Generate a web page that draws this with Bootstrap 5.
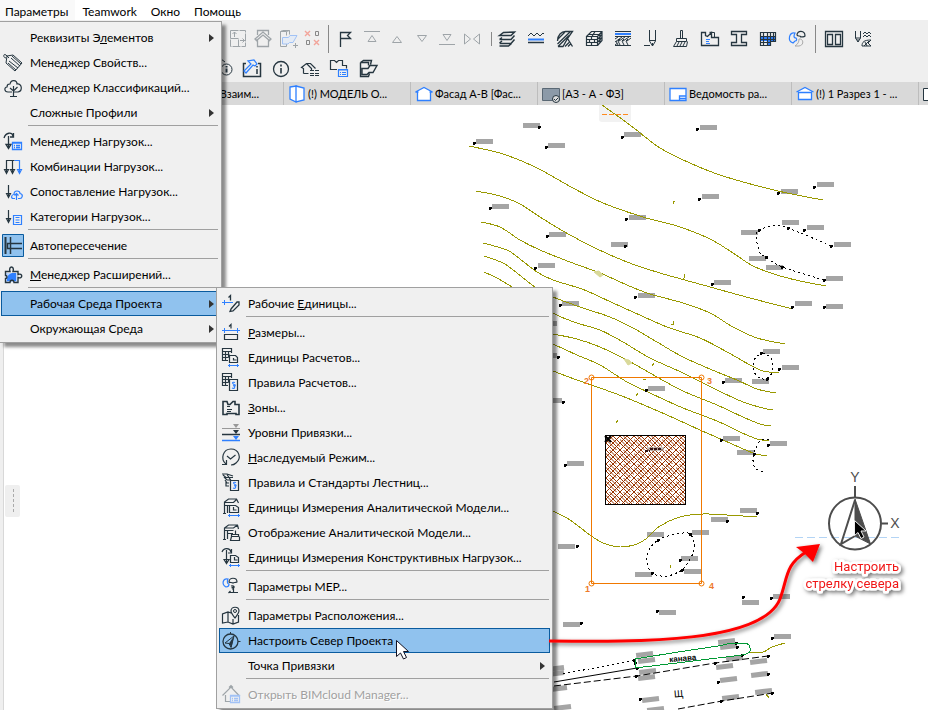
<!DOCTYPE html>
<html lang="ru">
<head>
<meta charset="utf-8">
<meta name="viewport" content="width=device-width, initial-scale=1">
<title>Параметры — Рабочая Среда Проекта</title>
<link href="https://cdn.jsdelivr.net/npm/bootstrap@5.3.0/dist/css/bootstrap.min.css" rel="stylesheet">
<style>
  :root { --ink: #263640; --accent: #2f80ff; --panel: #f0f0f0; --line: #a0a0a0; --hit: #90c2ee; --hit-line: #0a5b9e; }
  body { font-family: Lato, "Noto Sans", sans-serif; font-size: 12px; line-height: 16px; color: #000; background: #fff; }
  button { font: inherit; color: inherit; }
  svg { display: block; fill: none; stroke: var(--ink); stroke-width: 1; }
  .b { stroke: var(--accent); }
  .bf { fill: var(--accent); stroke: none; }
  .kf { fill: var(--ink); stroke: none; }
  .top-menu { height: 20px; }
  .top-menu .nav-link { padding: 4px 7px 0; color: #000; line-height: 16px; }
  .top-menu .nav-link.active { background: #f9f9f9; padding-left: 5px; }
  .tools { background: #efefef; padding: 4px 0 1px; }
  .tool-row { height: 30px; padding-left: 225px; }
  .tool-row.second { height: 27px; padding: 3px 0 0 208px; }
  .tool { width: 29px; height: 24px; padding: 0; border: 0; background: none; flex: none; display: flex; justify-content: center; align-items: center; }
  .tool.slim { width: 25px; }
  .off { opacity: .4; }
  .rule { width: 1px; height: 28px; background: #888; flex: none; margin: 0 5px 0 3px; }
  .rule.short { height: 14px; margin: 0 0 0 7px; }
  .rule.last { margin: 0 3px 0 4px; }
  .doc-tabs { background: #d9d9d9; height: 23px; padding-left: 156px; }
  .doc-tab { flex: 0 0 127px; padding: 0 0 0 4px; gap: 2px; border: 0; border-left: 1px solid #bdbdbd; background: none; font-size: 11px; white-space: nowrap; }
  .plan { background: linear-gradient(90deg, #efefef 3px, #d8d8d8 3px, #d8d8d8 4px, #fff 4px); min-height: 400px; }
  .grip { left: 5px; top: 380px; width: 15px; height: 32px; background: #efefef; border-radius: 2px; }
  .menu-box { font-size: 12px; margin: 0; padding: 3px 2px 1px; background: var(--panel); border: 1px solid var(--line); border-radius: 0; color: #000; box-shadow: 4px 4px 3px rgba(0,0,0,.45); }
  .menu-main { top: 21px; left: 0; width: 222px; border-left: 0; padding-left: 1px; z-index: 10; }
  .menu-sub { top: -4px; left: 215px; width: 337px; }
  .entry { display: flex; align-items: center; height: 25px; padding: 0 5px 0 0; line-height: 16px; color: #000; }
  .entry > svg:first-child, .entry > .blank { width: 24px; height: 24px; margin-right: 5px; flex: none; }
  .entry .tri { margin-left: auto; fill: #333; stroke: none; flex: none; }
  .entry.hit, .entry:hover:not(:disabled) { background: var(--hit); box-shadow: inset 0 0 0 1px var(--hit-line); }
  .entry:disabled { color: #a0a0a0; text-shadow: 1px 1px #fff; }
  .entry:disabled svg { opacity: .4; }
  .split { height: 4px; margin: 0 1px 0 27px; border-top: 1px solid var(--line); }
  .over { z-index: 20; pointer-events: none; }
  .contour { stroke: #999900; shape-rendering: crispEdges; }
  .spots { stroke: #000; stroke-dasharray: 2 3; shape-rendering: crispEdges; }
  .tag-box { fill: #a5a5a5; stroke: none; }
  .pt { fill: #000; stroke: none; }
  .num { font: bold 9px "Liberation Sans", sans-serif; fill: #ee7a2a; stroke: none; }
  .axis { font: 14px "Liberation Sans", sans-serif; fill: #4d4d4d; stroke: none; }
  .note { font: 13px Roboto, sans-serif; fill: #f01818; stroke: #fff; stroke-width: 5px; stroke-linejoin: round; paint-order: stroke; }
</style>
<script src="https://cdn.jsdelivr.net/npm/bootstrap@5.3.0/dist/js/bootstrap.bundle.min.js"></script>
</head>
<body class="d-flex flex-column min-vh-100 position-relative overflow-hidden">

<nav class="top-menu nav flex-nowrap ps-0" aria-label="Главное меню">
  <a class="nav-link active" href="#">Параметры</a>
  <a class="nav-link" href="#">Teamwork</a>
  <a class="nav-link" href="#">Окно</a>
  <a class="nav-link" href="#">Помощь</a>
</nav>

<div class="tools" role="toolbar" aria-label="Инструменты">
  <div class="tool-row d-flex align-items-center">
    <button class="tool slim off" aria-label="Размер"><svg width="24" height="24"><path d="M4.500 3.500h15v16h-15zM4.500 11.500h8v8M8.500 10V5M6.500 7l2-2 2 2M14 13.500h5M16.500 11.500l2 2-2 2" stroke-dasharray="8 1"/></svg></button>
    <button class="tool slim off" aria-label="Дом"><svg width="24" height="24"><path d="M6.500 8V3.500h11V8M4 12l8-7 8 7-1.500 1.500L12 8l-6.500 5.500zM6.500 13v6.500h11V13" stroke-width="1.300"/></svg></button>
    <button class="tool slim off" aria-label="Добавить элемент"><svg width="24" height="24"><path d="M4.500 4.500l2-1h7v4M4.500 4.500v15h6v-4M4.500 4.500h6v4M10.500 4.500l3-1M17 18.500h5M19.500 16v5"/><path class="b" fill="#d6e6ff" d="M6.500 10.500h6l1.500-2h7l-4 7h-3.500l-1.500 1.500H6.500z"/></svg></button>
    <button class="tool slim" aria-label="Точки"><svg width="24" height="24"><path d="M4 4l5 5m0-5l-5 5M13 13l5 5m0-5l-5 5" stroke="#f2a49a" stroke-width="1.400"/><path d="M14.500 4.500h3v4h-3zM5.500 13.500h3v4h-3z" stroke="#888"/></svg></button>
    <span class="rule"></span>
    <button class="tool slim" aria-label="Флаг"><svg width="24" height="24"><path d="M5.500 20V5.500h10l-3 3 3 3h-10" stroke-width="1.300"/></svg></button>
    <button class="tool slim off" aria-label="На передний план"><svg width="24" height="24"><path d="M4 4.500h16M8 14.500l4-6 4 6z"/></svg></button>
    <button class="tool slim off" aria-label="Вверх"><svg width="24" height="24"><path d="M7.500 15.500l4.500-6 4.500 6z"/></svg></button>
    <button class="tool slim off" aria-label="Вниз"><svg width="24" height="24"><path d="M7.500 8.500l4.500 6 4.500-6z"/></svg></button>
    <button class="tool slim off" aria-label="На задний план"><svg width="24" height="24"><path d="M4 17.500h16M8 7.500l4 6 4-6z"/></svg></button>
    <button class="tool slim off" aria-label="Отразить"><svg width="24" height="24"><path d="M4.500 7v10l6-5zM19.500 7v10l-6-5z"/></svg></button>
    <span class="rule short"></span>
    <button class="tool" aria-label="Слои"><svg width="24" height="24"><path d="M4.500 8.500l4-3 11-.5-3.500 3.500zM4.500 12.500l2.500-2M19.500 8.500L16 12.500H4.500M4.500 16l2.500-2M19.500 12.500L16 16.500H4.500M4.500 19h9l3-2.500" stroke-width="1.500"/></svg></button>
    <button class="tool" aria-label="Типы линий"><svg width="24" height="24"><path d="M4 9l3-3 3 3 3-3 3 3 3-3 1 1"/><path class="b" d="M4 12.500h16" stroke-width="2"/><path d="M4 15.500h16" stroke-width="1.500"/></svg></button>
    <button class="tool" aria-label="Штриховки"><svg width="24" height="24"><path d="M4.500 14c0-6 4-9.500 8-9.500h7l-5 7 5 8M5 19.500h5l4.500-8M5 12l7-7M4.500 17L17 5M5 19.500l11-11M12 19.500l4-4M15 19.500l3-3" stroke-width="1.300"/></svg></button>
    <button class="tool" aria-label="Строительные материалы"><svg width="24" height="24"><path d="M4.500 9.500h11v9h-11zM4.500 9.500l5-5h10.500v9l-4.500 5M15.500 9.500l4.500-5M4.500 12.500h11l4.500-5M4.500 15.500h11l4.500-5M9.500 9.500v3M7.500 12.500v3M12.500 12.500v3M9.500 15.500v3M7 7.500h11M13 4.500l-3 5M18 7v9" stroke-width="1.200"/></svg></button>
    <button class="tool" aria-label="Многослойные конструкции"><svg width="24" height="24"><path d="M4 4.500h16M4 9.500h16"/><path class="b" d="M4 7h16" stroke-width="2"/><path d="M4 12l3-2M4 15l7-5M4 18l2-1.500M9 12l-2 2 2 4M8 14l6-4M13 12l-2 2 2 4M12 14l6-4M17 12l-2 2 2 4M16 14l4-3M5 14l2 4M4 18.500h16"/></svg></button>
    <button class="tool" aria-label="Перья"><svg width="24" height="24"><path d="M9.500 3v11l3 5 3-5V3M9.500 13.500h6M12.500 16v3M4 18.500h6" /></svg></button>
    <button class="tool" aria-label="Покрытия"><svg width="24" height="24"><path d="M11.500 3.500h2v8h-2zM7.500 11.500h10v3h-10zM7.500 14.500l-3 5h13l1-5M8 19l2-4M11 19l2-4M14 19l2-4"/></svg></button>
    <button class="tool" aria-label="Категории зон"><svg width="24" height="24"><path d="M3.500 5.500h4v3l2 1 4-4v5h7v8h-17zM13.500 5.500h-2" stroke-width="1.300"/><path d="M13.500 5.500h3v5"/><path class="b" d="M8 12.500h4M8 14.500h3M8 16.500h4"/></svg></button>
    <button class="tool" aria-label="Профили"><svg width="24" height="24"><path d="M4.500 4.500h15v3h-5v8h5v3h-15v-3h5v-8h-5z" stroke-width="1.300"/></svg></button>
    <button class="tool" aria-label="Сетка"><svg width="24" height="24"><path d="M5 9h14v5h-4v4h-4v-4H5z" class="bf"/><path d="M4.500 5.500h15v9h-5v4h-10zM4.500 9.500h15M4.500 12.500h15M4.500 15.500h10M7.500 5v13M11.500 5v13M14.500 5v10M17.500 5v10" stroke-width="1.200"/></svg></button>
    <button class="tool" aria-label="Системы MEP"><svg width="24" height="24"><path class="b" d="M10 6c-6-1-8 8-2 10l2-2c2 0 2-2 1-3-3 0-2-3-1-5z" stroke-width="1.200"/><path d="M12 8c0-5 8-5 8 1-2 2-3 0-4 1-1-2-3 0-4-2z" stroke-width="1.200"/><path stroke="#aaa" d="M14 12c4-1 6 6 0 7h-4c3-2 4-4 4-7z"/></svg></button>
    <span class="rule last"></span>
    <button class="tool" aria-label="Палитры"><svg width="24" height="24"><path d="M3.500 4.500h17v15h-17zM5.500 7.500h5v10h-5zM13.500 7.500h5v10h-5z" stroke-width="1.300"/></svg></button>
    <button class="tool" aria-label="Подбор параметров"><svg width="24" height="24"><path d="M4.500 4v7l2.500 4 2.500-4V4M4.500 11h5M12 7l2-2 2 2 2-2 2 2M12 10l2-2 2 2 2-2 2 2M11 19c0-4 2-6 9-6l-3 3 3 3zM13 19l5-5M16 19l-2-4M7 12v3"/></svg></button>
  </div>
  <div class="tool-row second d-flex">
    <button class="tool" aria-label="Сведения об элементе"><svg width="24" height="24"><path d="M4 6l6-4 4 3"/><circle cx="15.500" cy="12.500" r="5.500"/><path d="M15.500 9v1.500M15.500 11.500v4" stroke-width="2"/></svg></button>
    <button class="tool" aria-label="Правка свойств"><svg width="24" height="24"><path d="M6 6.500H3.500v13h17v-13H18M17 9v1.500M17 12v5" stroke-width="1.500"/><path class="b" d="M4 14l7-7-3-3 6-1 3 4-2 2-2-1-7 8z" stroke-width="1.200"/></svg></button>
    <button class="tool" aria-label="Информация"><svg width="24" height="24"><circle cx="12" cy="12" r="7.500" stroke-width="1.300"/><path d="M12 7.500v2M12 11v5.500" stroke-width="1.600"/></svg></button>
    <button class="tool" aria-label="Список элементов"><svg width="24" height="24"><path d="M5.500 16.500v-5l-2-1 5-4h4l5 5M8.500 6.500l5 5v2M5.500 16.500h5" stroke-width="1.200"/><path d="M12 13.500h4M17 13.500h4M12 16.500h4M17 16.500h4M12 18.500h4M17 18.500h4"/></svg></button>
    <button class="tool" aria-label="Таблица зон"><svg width="24" height="24"><path d="M10 12.500H3.500v-9h4l2 2 2-2h4v5h4v3" stroke-width="1.200"/><path class="b" d="M11.500 12.500h9v7h-9zM11 13h10M13 15.500h1M15 15.500h4M13 17.500h1M15 17.500h4" stroke-width="1.200"/></svg></button>
    <button class="tool" aria-label="Пакет элементов"><svg width="24" height="24"><path d="M4.500 5.500l3-2h8l-1 4M4.500 5.500h8v3M4.500 5.500v14h8l1-3M6 11.500h6l2-3h7l-4 7h-4l-2 2H6z" stroke-width="1.400"/></svg></button>
  </div>
</div>

<div class="doc-tabs d-flex flex-nowrap overflow-hidden" role="tablist">
  <button class="doc-tab d-flex align-items-center justify-content-end pe-4" role="tab">Взаим...</button>
  <button class="doc-tab d-flex align-items-center" role="tab"><svg width="18" height="20"><path class="b" fill="#fff" d="M2 3l6-1v16l-6-3zM8 2l8 2v12l-8 2z" stroke-width="1.300"/></svg><span>(!) МОДЕЛЬ О...</span></button>
  <button class="doc-tab d-flex align-items-center" role="tab"><svg width="18" height="20"><path class="b" fill="#fff" d="M2.500 8v8.500h13V8M.5 8L9 3.500 17.500 8z" stroke-width="1.300"/><path d="M3.500 7h11v2h-11z" fill="#fff" stroke="none"/></svg><span>Фасад А-В [Фас...</span></button>
  <button class="doc-tab d-flex align-items-center" role="tab"><svg width="18" height="20"><path fill="#8c9aa8" stroke="#5a6874" d="M.5 4.500h17v12H.5z"/><circle cx="14" cy="15" r="3.500" fill="#ddd"/><path d="M12 15l1.500 1.500L16 14"/></svg><span>[АЗ - А - ФЗ]</span></button>
  <button class="doc-tab d-flex align-items-center" role="tab"><svg width="18" height="20"><path class="b" fill="#fff" d="M1 4.500h16v12H1zM10.500 16v-4H17M11 14.500h6" stroke-width="1.300"/></svg><span>Ведомость ра...</span></button>
  <button class="doc-tab d-flex align-items-center" role="tab"><svg width="18" height="20"><path class="b" fill="#fff" d="M2.500 8.500h13v7h-13zM.5 8L9 3.500 17.500 8" stroke-width="1.300"/></svg><span>(!) 1 Разрез 1 - ...</span></button>
  <button class="doc-tab d-flex align-items-center" role="tab" aria-label="План"><svg width="18" height="20"><path fill="#fff" d="M.5 4.500h16v12H.5z"/></svg></button>
</div>

<main class="plan flex-grow-1 position-relative overflow-hidden">
  <div class="grip position-absolute"><svg width="15" height="32"><path d="M8.500 4v24" stroke="#aaa" stroke-dasharray="3 2"/></svg></div>
  <svg class="position-absolute top-0 start-0 w-100 h-100" viewBox="0 105 928 605" preserveAspectRatio="xMinYMin slice" role="img" aria-label="План участка">
    <defs>
      <pattern id="hatch" width="14" height="14" patternUnits="userSpaceOnUse" patternTransform="translate(606 436)">
        <path d="M-1-1l16 16M-1 15L15-1M-1 6l9 9M6-1l9 9M8-1L-1 8M15 6L6 15M-1 2.500L11.500 15M2.500-1L15 11.500" stroke="#993300"/>
      </pattern>
    </defs>
    <rect x="599" y="100" width="32" height="22" rx="3" fill="#f2f2f2" stroke="none"/>
    <g id="terrain"></g>
    <path d="M602 114.500h26" stroke="#ff8a1e" stroke-dasharray="5 2"/>
    <path d="M594 272l5-1 4 4-3 2zM624 359l5 1 3 3-4 2z" fill="#d9d99a" stroke="#d9d99a"/>
    <path class="contour" d="M673.500 204v-2l1-1M684.500 274v3l-1 2M673 321v3h-2M654 363l-2 3M646 379l-3 1M638 393l-2 3M618 420l-2 3M670 565l1 3M766 694l3 4"/>
    <rect x="605.500" y="435.500" width="80" height="69" fill="url(#hatch)" stroke="#000"/>
    <path d="M605 436l6 6M611 436l-6 6" stroke="#000" stroke-width="2"/>
    <rect class="tag-box" x="647" y="447" width="17" height="4" opacity=".6"/>
    <path d="M645 451h5M650 449h12" stroke="#311" stroke-width="2" stroke-dasharray="3 1"/>
    <g stroke="#f07800">
      <path d="M591.500 377.500h110v206h-110z"/>
      <circle cx="591.500" cy="377.500" r="2.500"/><circle cx="701.500" cy="377.500" r="2.500"/><circle cx="591.500" cy="583.500" r="2.500"/><circle cx="701.500" cy="583.500" r="2.500"/>
    </g>
    <text class="num" x="584" y="384">2</text><text class="num" x="707" y="384">3</text><text class="num" x="585" y="592">1</text><text class="num" x="709" y="589">4</text>
    <path d="M554 682L637 668" stroke="#000"/>
    <path class="spots" d="M563 674L635 660"/>
    <path d="M554 686L637 676 715 663 768 656M678 709L722 701 773 693" stroke="#000" stroke-dasharray="7 3"/>
    <path d="M635 659L678 652 718 646 732 643H745Q750 644 750 648V651Q749 654 742 655L685 662 635 668Z" stroke="#009933" shape-rendering="crispEdges"/>
    <text transform="rotate(-5 683 661)" x="683" y="661" text-anchor="middle" fill="#000" stroke="none" font-family="Liberation Sans" font-size="8" font-weight="bold">канава</text>
    <text transform="rotate(-5 679 697)" x="679" y="697" text-anchor="middle" fill="#000" stroke="none" font-family="Liberation Sans" font-size="10">Щ</text>
    <path d="M795 537.500h107" stroke="#b3d4f5" stroke-dasharray="8 4"/>
    <g stroke="#4d4d4d" stroke-width="2">
      <circle cx="855" cy="523.500" r="26"/>
      <path d="M855 497v-11M882 523.500h6M855 500l-14 44 14-8"/>
      <path d="M855 499l15.500 45L855 536z" fill="#4d4d4d" stroke-width="1"/>
    </g>
    <text class="axis" x="855" y="482" text-anchor="middle">Y</text>
    <text class="axis" x="895" y="528" text-anchor="middle">X</text>
    <path d="M854.500 520.500v15l3.500-3 3 6 3-1.500-3-6h5z" fill="#000" stroke="#eee"/>
  </svg>
</main>

<ul class="dropdown-menu show menu-box menu-main" id="mainMenu">
  <li><button class="dropdown-item entry"><span class="blank"></span><span>Реквизиты Э<u>л</u>ементов</span><svg class="tri" width="5" height="8"><path d="M0 0l5 4-5 4z"/></svg></button></li>
  <li><button class="dropdown-item entry"><svg viewBox="0 0 24 24"><path d="M6 5l6-1 9 8-7 8-9-8zM8 7l-3-3c-3-2-3 3 0 3M8 10l9 7M10 7l9 8M7 12l8 7M11 5l9 8" /></svg><span>Менеджер Свойств...</span></button></li>
  <li><button class="dropdown-item entry"><svg viewBox="0 0 24 24"><path d="M11 16H7c-4 0-4-5-1-5 0-3 2-3 3-3 1-5 7-4 7 0 5-1 6 7 1 8h-4M12.500 10v10M9 12l3.500 3 4-4M9 20.500h7" stroke-width="1.200"/></svg><span>Менеджер Классификаций...</span></button></li>
  <li><button class="dropdown-item entry"><span class="blank"></span><span>Сложные Профили</span><svg class="tri" width="5" height="8"><path d="M0 0l5 4-5 4z"/></svg></button></li>
  <li class="split" role="separator"></li>
  <li><button class="dropdown-item entry"><svg viewBox="0 0 24 24"><path d="M3 8c2-6 8-6 9-2M12.500 3v4H9M7.500 6v12M5 14.500l2.500 4 2.500-4z" stroke-width="1.300"/><path class="b" d="M11.500 12.500h9v7h-9zM11 13h10M13 15.500h1M15 15.500h4M13 17.500h1M15 17.500h4" stroke-width="1.300"/></svg><span>Менеджер Нагрузок...</span></button></li>
  <li><button class="dropdown-item entry"><svg viewBox="0 0 24 24"><path d="M5.500 18V5.500h8M11.500 18V5.500M3.500 14.500l2 4 2-4zM9.500 14.500l2 4 2-4z" stroke-width="1.200"/><path class="b" d="M13.500 5.500h5V18M16.500 14.500l2 4 2-4z" stroke-width="1.200"/></svg><span>Комбинации Нагрузок...</span></button></li>
  <li><button class="dropdown-item entry"><svg viewBox="0 0 24 24"><path d="M7.500 5v12M5.500 13.500l2 4 2-4z" stroke-width="1.200"/><path class="b" d="M14 18.500h-2c-2 0-2-4 1-4 0-5 6-4 6-1 4 1 2 5 0 5h-2M15.500 13v7M13.500 15.500l2-2 2 2" stroke-width="1.200"/></svg><span>Сопоставление Нагрузок...</span></button></li>
  <li><button class="dropdown-item entry"><svg viewBox="0 0 24 24"><path d="M7.500 5v12M5.500 13.500l2 4 2-4z" stroke-width="1.200"/><path class="b" d="M12.500 10.500h8v9h-8zM14.500 12.500h4M14.500 15h4M14.500 17.500h4" stroke-width="1.200"/></svg><span>Категории Нагрузок...</span></button></li>
  <li class="split" role="separator"></li>
  <li><button class="dropdown-item entry"><svg viewBox="0 0 24 24"><path d="M1.500 .5h21v22h-21z" fill="#90c2ee" stroke="#0a5b9e"/><path d="M4.500 3v17" stroke-width="2"/><path d="M9.500 3v17M21 9.500H6.500v5H21" stroke-width="1.500"/></svg><span>Автопересечение</span></button></li>
  <li class="split" role="separator"></li>
  <li><button class="dropdown-item entry"><svg viewBox="0 0 24 24"><path d="M5 10h11v9H5z" fill="#b9d4ff" stroke="none"/><path class="bf" d="M6 16c0-3 2-5 5-6h4v8H6z"/><path d="M4.500 8.500h4.500c-2-6 5-6 3 0h5v3c5-2 5 5 0 3v5h-4c0-3-4-3-4 0H4.500v-4c2 0 2-3 0-3z" stroke-width="1.400"/></svg><span><u>М</u>енеджер Расширений...</span></button></li>
  <li class="split" role="separator"></li>
  <li class="position-relative">
    <button class="dropdown-item entry hit" aria-expanded="true"><span class="blank"></span><span>Рабочая Среда Проекта</span><svg class="tri" width="5" height="8"><path d="M0 0l5 4-5 4z"/></svg></button>
    <ul class="dropdown-menu show menu-box menu-sub">
      <li><button class="dropdown-item entry"><svg viewBox="0 0 24 24"><path class="b" d="M3 10.500h11M5.500 8v5"/><path d="M9.500 5.500l2-2v5M12 17l6-7h2v3l-6 6-3 .5z" stroke-width="1.300"/></svg><span>Рабочие <u>Е</u>диницы...</span></button></li>
      <li class="split" role="separator"></li>
      <li><button class="dropdown-item entry"><svg viewBox="0 0 24 24"><path class="b" d="M3 9.500h18M5.500 7v5M18.500 7v5"/><path d="M10 5.500l2-2v4M5.500 13.500h13v5h-13z" stroke-width="1.200"/></svg><span><u>Р</u>азмеры...</span></button></li>
      <li><button class="dropdown-item entry"><svg viewBox="0 0 24 24"><path d="M9 14.500H3.500v-12h9V7M3.500 5.500h9M3.500 8.500h7M3.500 11.500h6M6.500 5.500v9M9.500 5.500v6M10.500 16.500v-7h6l2 2v5zM14.500 12v2h3" stroke-width="1.200"/><path class="b" d="M9 19.500h11M10.500 18v3M18.500 18v3"/></svg><span>Е<u>д</u>иницы Расчетов...</span></button></li>
      <li><button class="dropdown-item entry"><svg viewBox="0 0 24 24"><path d="M9 14.500H3.500v-12h9V7M3.500 5.500h9M3.500 8.500h7M3.500 11.500h6M6.500 5.500v9M9.500 5.500v6M10.500 8.500h8v11h-8z" stroke-width="1.200"/><path class="b" d="M16 11.500c-3-1-3 1-1 2 2 1 1 2-1 1M16 13.500c1 2-1 2-1 2M13 17c2 1 3 0 2.500-1" stroke-width="1.200"/></svg><span>Правила Расчетов...</span></button></li>
      <li><button class="dropdown-item entry"><svg viewBox="0 0 24 24"><path d="M4 18.500v-13h4l1 3h2l3-3h2v3h4v10h-3v-1h-9v1z" stroke-width="1.600"/><path d="M8 10.500h3M8 13.500h5M8 15.500h4"/></svg><span><u>З</u>оны...</span></button></li>
      <li><button class="dropdown-item entry"><svg viewBox="0 0 24 24"><path d="M3 7.500h18" stroke="#999"/><path fill="#999" stroke="none" d="M14 3h6l-3 4z"/><path d="M3 13.500h18" stroke-width="1.500"/><path class="kf" d="M14 9h6l-3 4z"/><path class="b" d="M3 19.500h18" stroke-width="1.500"/><path class="bf" d="M14 15h6l-3 4z"/></svg><span>Уровни Привязки...</span></button></li>
      <li><button class="dropdown-item entry"><svg viewBox="0 0 24 24"><path d="M7 18c-6-5-3-15 5-15s11 9 5 14c-1 1-3 2-5 2M3 18.500h4.500V14M8 10l3.500 3 5-4" stroke-width="1.200"/></svg><span><u>Н</u>аследуемый Режим...</span></button></li>
      <li><button class="dropdown-item entry"><svg viewBox="0 0 24 24"><path d="M3 3h5l6 2M4 4l3 2.500h7M5 6l3 3h4M6 9l2 3h2M8 3.500l4 6M7 11v4h3M11.500 9.500h8v10h-8z" stroke-width="1.200"/><path class="b" d="M17 11.500c-3-1-3 1-1 2 2 1 1 2-1 1M14 17c2 1 3 0 2.500-2" stroke-width="1.200"/></svg><span>Правила и Стандарты Лестниц...</span></button></li>
      <li><button class="dropdown-item entry"><svg viewBox="0 0 24 24"><path d="M5.500 17V6l4-3h8l2 4M5.500 6.500h9l3-3M5.500 9.500h5M8.500 9.500V17M4 17.500h3M10.500 16.500v-7h6l3 2v5zM14.500 11v3h3" stroke-width="1.200"/><path class="b" d="M9 19.500h12M10.500 18v3M19.500 18v3"/></svg><span>Единицы Измерения Аналитической Модели...</span></button></li>
      <li><button class="dropdown-item entry"><svg viewBox="0 0 24 24"><path d="M5.500 18V7l4-3h9l1 4M5.500 7h9l4-3M5.500 9.500h9M8.500 9.500V18M4 18.500h3M16.500 9.500v4M12.500 13.500h7v2h-7zM12.500 15.500l-1 4h9v-4M9 12.500h5" stroke-width="1.200"/></svg><span>Отображение Аналитической Модели...</span></button></li>
      <li><button class="dropdown-item entry"><svg viewBox="0 0 24 24"><path d="M3 6c2-5 8-4 9 0M12.500 3v4H9M7.500 4v13M5 13.500l2.500 4 2.500-4zM11.500 16.500v-7h5l3 2v5zM15.500 11v3h3" stroke-width="1.200"/><path class="b" d="M10 19.500h11M11.500 18v3M19.500 18v3"/></svg><span>Единицы Измерения Конструктивных Нагрузок...</span></button></li>
      <li class="split" role="separator"></li>
      <li><button class="dropdown-item entry"><svg viewBox="0 0 24 24"><path class="b" d="M9 4c-5-1-7 5-2 8 2 0 3-1 3-3-2 0-2-3-1-5z" stroke-width="1.200"/><path d="M10 7c0-5 8-5 8 0-2 1-3 0-4 1-1-1-3 0-4-1zM12 11c5-1 3 3 1 3M12.500 13l2-1v5M10 17.500h9M9.500 18l2-2" stroke-width="1.200"/></svg><span>Параметры MEP...</span></button></li>
      <li class="split" role="separator"></li>
      <li><button class="dropdown-item entry"><svg viewBox="0 0 24 24"><path d="M12 9l-3-1-5.500 2v9L9 18l5 2 5.500-2v-7M9 8v10M14 15v5M16 14c-3-4-4-5-4-7 0-5 8-5 8 0 0 2-2 4-4 7z" stroke-width="1.200"/><circle cx="16" cy="7" r="1.500"/></svg><span>Параметры Расположения...</span></button></li>
      <li><button class="dropdown-item entry hit"><svg viewBox="0 0 24 24"><circle cx="11.500" cy="12.500" r="7.500" stroke-width="1.300"/><path d="M11.500 5V3M19 12.500h2.500"/><path d="M15 7l-9 7 4 .5 2 4z"/><path class="kf" d="M15 7l-5 7.500 2.500 4z"/></svg><span>Настроить Север Проекта</span></button></li>
      <li><button class="dropdown-item entry"><span class="blank"></span><span>Точка Привязки</span><svg class="tri" width="5" height="8"><path d="M0 0l5 4-5 4z"/></svg></button></li>
      <li class="split" role="separator"></li>
      <li><button class="dropdown-item entry" disabled><svg viewBox="0 0 24 24"><path d="M11 18.500H6.500V12M3.500 12.500L12 4l8 8.500h-3M10 4.500l2-2 2 2" stroke-width="1.200"/><path class="b" d="M11.500 12.500h9v7h-9zM11 13h10M13 15.500h1M15 15.500h4M13 17.500h1M15 17.500h4" stroke-width="1.300"/></svg><span>Открыть BIMcloud Manager...</span></button></li>
    </ul>
  </li>
  <li><button class="dropdown-item entry"><span class="blank"></span><span>Окружающая Среда</span><svg class="tri" width="5" height="8"><path d="M0 0l5 4-5 4z"/></svg></button></li>
</ul>

<svg class="over position-absolute top-0 start-0 w-100 h-100" viewBox="0 0 928 710" preserveAspectRatio="xMinYMin slice" role="img" aria-label="Настроить стрелку севера">
  <defs><filter id="soft" x="-10%" y="-30%" width="120%" height="170%"><feDropShadow dx="2" dy="2" stdDeviation="2" flood-opacity=".55"/></filter></defs>
  <g filter="url(#soft)">
    <path d="M549 641C640 642 762 643 780 599 788 577 785 565 806 552" stroke="#f00" stroke-width="3"/>
    <path d="M820 544L796 547 804 553 813 562z" fill="#f00" stroke="none"/>
  </g>
  <g filter="url(#soft)">
    <text class="note" x="899" y="571" text-anchor="end">Настроить</text>
    <text class="note" x="899" y="588" text-anchor="end">стрелку севера</text>
  </g>
  <path d="M396.500 640.500v16l4-3.500 3 6 3-1.500-3-6h5z" fill="#fff" stroke="#112"/>
</svg>

<script>
  // Contour lines, each a list of x, y pairs.
  const contours = [
    [602,105,630,125,660,148,690,163,723,176,778,191,823,200],
    [469,146,503,154,537,168,573,188,603,203,643,217,677,226,710,239,733,253,753,266,777,275,800,281,826,286],
    [476,191,500,196,520,204,540,217,563,231,593,247,627,262,660,273,703,285,750,298,793,309],
    [481,222,500,227,520,240,540,250,570,262,600,273,627,285,650,294,683,303,710,313,733,327,757,338,785,344],
    [483,243,507,250,520,259,537,272,553,280,582,289,600,297,633,312,667,327,700,338,727,352,750,365,763,371,779,373],
    [484,256,503,263,517,273,535,287,553,297,583,308,610,317,633,328,657,342,683,357,717,372,737,380,757,389,776,393],
    [484,272,497,278,512,287,553,313,577,323,600,330,623,342,650,358,683,373,717,390,743,402,763,408,773,410],
    [553,334,577,339,600,347,627,360,657,377,683,391,717,405,743,417,760,424,771,426],
    [553,344,577,355,600,365,627,382,650,393,683,408,717,421,740,432,757,439,769,441],
    [553,371,577,380,600,388,627,398,667,415,700,430,723,440,753,453,767,456],
    [553,511,570,520,590,535,603,543,620,547,637,544,647,538,660,526,680,517,703,514,727,515,757,517],
    [748,653,763,652,772,647,785,643]
  ];
  const dotted = [
    [831,246,788,228,773,226,759,230,756,236,758,247,761,255,766,257,782,267,824,280],
    [763,353,771,358,773,367,770,376,763,379,756,375,753,366,756,357,763,353],
    [769,439,761,440,756,448,753,458,755,468,763,472],
    [658,540,668,536,683,533,690,534,694,542,693,553,688,562,682,570,667,576,652,573,647,560,650,548,658,540]
  ];
  // Survey marks: label x, y, then point x, y.
  const marks = [
    [523,123,539,127],[476,139,474,143],[548,143,546,147],[624,132,622,137],[492,204,490,208],[629,215,626,219],
    [549,232,547,236],[611,242,625,246],[538,263,535,268],[700,125,697,129],[702,194,699,199],[781,189,778,193],
    [817,182,814,187],[782,220,788,228],[807,225,804,230],[741,230,759,230],[834,242,831,246],[749,256,766,257],
    [766,265,782,267],[826,276,824,280],[714,280,712,284],[638,293,635,297],[562,301,560,305],[540,321,541,323],
    [540,353,558,357],[545,398,563,402],[795,301,792,307],[763,349,761,353],[782,365,779,369],[752,379,767,379],
    [725,378,723,382],[648,386,646,390],[723,436,721,440],[770,441,768,445],[737,450,754,454],[567,461,565,465],
    [711,517,727,521],[692,530,690,534],[647,532,658,540],[558,544,577,546],[681,556,680,560],[684,569,682,570],
    [635,572,652,573],[740,508,757,513],[742,600,743,597],[773,594,771,598],[563,622,581,623],[659,610,657,611],
    [774,634,772,638],[826,304,824,307]
  ];
  const tilted = [[644,654],[646,660],[647,671],[646,677],[726,641],[728,646],[734,658],[724,666],[728,679],[758,661],
    [759,674],[763,691],[730,697],[650,699],[655,709],[555,668],[555,673],[558,688],[562,707]];
  const points = [[634,660],[637,668],[635,663],[636,676],[715,663],[768,656],[742,655],[736,643],[737,647],[768,674],[718,682],[640,699],[772,693],[721,701]];

  // Catmull-Rom spline through the points, as cubic segments.
  function smooth(a) {
    const p = [];
    for (let i = 0; i < a.length; i += 2) p.push([a[i], a[i + 1]]);
    let d = `M${p[0]}`;
    for (let i = 0; i < p.length - 1; i++) {
      const a0 = p[i - 1] || p[i], b = p[i], c = p[i + 1], e = p[i + 2] || c;
      d += `C${b[0] + (c[0] - a0[0]) / 6} ${b[1] + (c[1] - a0[1]) / 6} ${c[0] - (e[0] - b[0]) / 6} ${c[1] - (e[1] - b[1]) / 6} ${c}`;
    }
    return d;
  }
  const dot = (x, y) => `<path class="pt" d="M${x - 1} ${y - 1}h3v2h-1v1h-2z"/>`;
  document.getElementById('terrain').innerHTML =
    marks.map(m => `<rect class="tag-box" x="${m[0]}" y="${m[1]}" width="17" height="5"/>`).join('') +
    tilted.map(t => `<rect class="tag-box" x="${t[0] - 8}" y="${t[1] - 2}" width="17" height="5" transform="rotate(-7 ${t[0]} ${t[1]})"/>`).join('') +
    contours.map(c => `<path class="contour" d="${smooth(c)}"/>`).join('') +
    dotted.map(c => `<path class="spots" d="${smooth(c)}"/>`).join('') +
    marks.map(m => dot(m[2], m[3])).join('') + points.map(q => dot(q[0], q[1])).join('');
</script>
</body>
</html>
